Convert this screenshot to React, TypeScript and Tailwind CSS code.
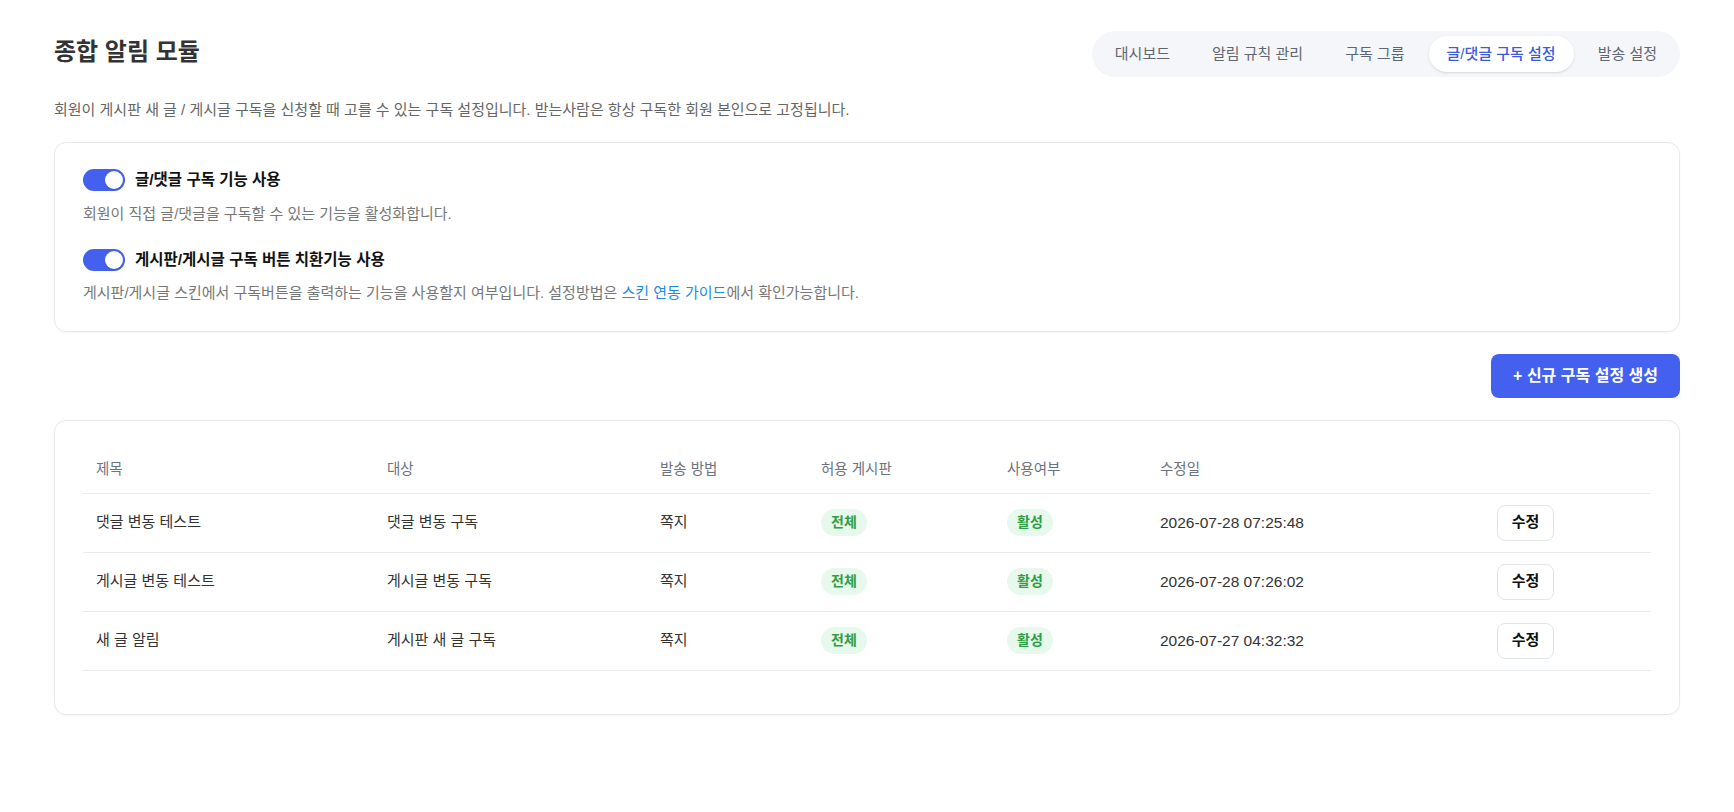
import React, { useState } from 'react';

const tabs = ['대시보드', '알림 규칙 관리', '구독 그룹', '글/댓글 구독 설정', '발송 설정'];

const rows = [
  { title: '댓글 변동 테스트', target: '댓글 변동 구독', method: '쪽지', boards: '전체', status: '활성', updated: '2026-07-28 07:25:48' },
  { title: '게시글 변동 테스트', target: '게시글 변동 구독', method: '쪽지', boards: '전체', status: '활성', updated: '2026-07-28 07:26:02' },
  { title: '새 글 알림', target: '게시판 새 글 구독', method: '쪽지', boards: '전체', status: '활성', updated: '2026-07-27 04:32:32' },
];

const Toggle: React.FC<{ on: boolean; onChange: (v: boolean) => void }> = ({ on, onChange }) => (
  <button
    type="button"
    onClick={() => onChange(!on)}
    className={`relative w-[42px] h-[22px] rounded-full shrink-0 ${on ? 'bg-[#4361ee]' : 'bg-gray-300'}`}
  >
    <span
      className={`absolute top-[2px] w-[18px] h-[18px] rounded-full bg-white shadow-sm ${on ? 'left-[22px]' : 'left-[2px]'}`}
    />
  </button>
);

const Badge: React.FC<{ children: React.ReactNode }> = ({ children }) => (
  <span className="inline-flex items-center h-[27px] px-[10px] rounded-full bg-[#e7f8ec] text-[#2f9e44] text-[14px] font-bold">
    {children}
  </span>
);

export default function App() {
  const [active, setActive] = useState(3);
  const [subscribeOn, setSubscribeOn] = useState(true);
  const [replaceOn, setReplaceOn] = useState(true);

  return (
    <div
      className="min-h-screen bg-white px-[54px] pt-[31px] pb-10 text-[#333]"
      style={{ fontFamily: '"Liberation Sans", "Noto Sans CJK KR", sans-serif' }}
    >
      {/* Header */}
      <div className="flex items-start justify-between">
        <h1 className="mt-[6px] text-[24px] leading-[30px] font-bold text-[#333]">종합 알림 모듈</h1>
        <div className="flex gap-[6px] p-[5px] rounded-full bg-[#f4f6f9]">
          {tabs.map((t, i) => (
            <button
              key={t}
              type="button"
              onClick={() => setActive(i)}
              className={`h-[36px] px-[18px] rounded-full text-[15px] ${
                i === active ? 'bg-white text-[#3b5bdb] font-medium shadow-sm' : 'text-[#5f6672]'
              }`}
            >
              {t}
            </button>
          ))}
        </div>
      </div>

      <p className="mt-[23px] text-[15px] leading-5 text-[#666]">
        회원이 게시판 새 글 / 게시글 구독을 신청할 때 고를 수 있는 구독 설정입니다. 받는사람은 항상 구독한 회원 본인으로 고정됩니다.
      </p>

      {/* Settings card */}
      <div className="mt-[22px] border border-[#e6e8eb] rounded-xl px-7 pt-[26px] pb-7 shadow-[0_1px_2px_rgba(0,0,0,0.03)]">
        <div>
          <div className="flex items-center gap-[10px] h-[22px]">
            <Toggle on={subscribeOn} onChange={setSubscribeOn} />
            <span className="text-[15.5px] font-bold text-[#111]">글/댓글 구독 기능 사용</span>
          </div>
          <p className="mt-[13px] text-[15px] leading-5 text-[#777]">회원이 직접 글/댓글을 구독할 수 있는 기능을 활성화합니다.</p>
        </div>
        <div className="mt-[25px]">
          <div className="flex items-center gap-[10px] h-[22px]">
            <Toggle on={replaceOn} onChange={setReplaceOn} />
            <span className="text-[15.5px] font-bold text-[#111]">게시판/게시글 구독 버튼 치환기능 사용</span>
          </div>
          <p className="mt-3 text-[15px] leading-5 text-[#777]">
            게시판/게시글 스킨에서 구독버튼을 출력하는 기능을 사용할지 여부입니다. 설정방법은{' '}
            <a href="#" className="text-[#228be6]">스킨 연동 가이드</a>에서 확인가능합니다.
          </p>
        </div>
      </div>

      <div className="mt-[22px] flex justify-end">
        <button
          type="button"
          className="h-[44px] px-[22px] rounded-lg bg-[#4361ee] text-white text-[16px] font-bold"
        >
          + 신규 구독 설정 생성
        </button>
      </div>

      {/* Table card */}
      <div className="mt-[22px] border border-[#e6e8eb] rounded-xl px-7 pt-[27px] pb-[43px] shadow-[0_1px_2px_rgba(0,0,0,0.03)]">
        <table className="w-full border-collapse table-fixed text-left">
          <colgroup>
            <col className="w-[291px]" />
            <col className="w-[273px]" />
            <col className="w-[161px]" />
            <col className="w-[186px]" />
            <col className="w-[153px]" />
            <col className="w-[337px]" />
            <col />
          </colgroup>
          <thead>
            <tr className="border-b border-[#e9ecef]">
              {['제목', '대상', '발송 방법', '허용 게시판', '사용여부', '수정일', ''].map((h, i) => (
                <th key={i} className="h-[45px] px-[13px] text-[14.5px] font-normal text-[#6b7280]">
                  {h}
                </th>
              ))}
            </tr>
          </thead>
          <tbody>
            {rows.map((r) => (
              <tr key={r.title} className="border-b border-[#e9ecef]">
                <td className="h-[59px] px-[13px] text-[15px]">{r.title}</td>
                <td className="px-[13px] text-[15px]">{r.target}</td>
                <td className="px-[13px] text-[15px]">{r.method}</td>
                <td className="px-[13px]"><Badge>{r.boards}</Badge></td>
                <td className="px-[13px]"><Badge>{r.status}</Badge></td>
                <td className="px-[13px] text-[15.5px] text-[#333]">{r.updated}</td>
                <td className="px-[13px]">
                  <button
                    type="button"
                    className="h-[36px] w-[57px] rounded-lg border border-[#e1e4e8] bg-white text-[15px] font-bold text-[#111]"
                  >
                    수정
                  </button>
                </td>
              </tr>
            ))}
          </tbody>
        </table>
      </div>
    </div>
  );
}
